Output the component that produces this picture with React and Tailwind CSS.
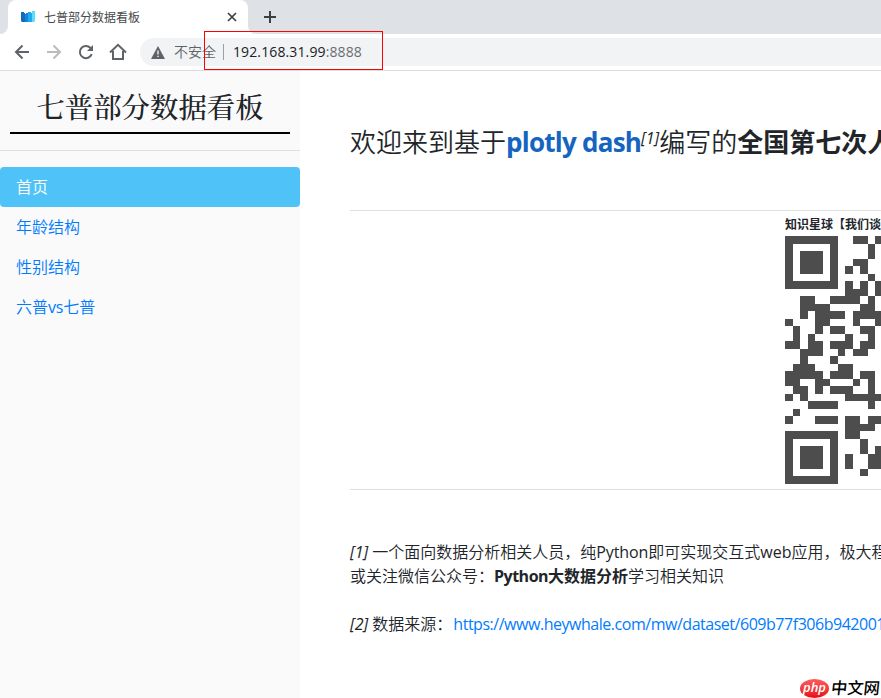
import React from "react";

const navItems = [
  { key: "home", label: "首页" },
  { key: "age", label: "年龄结构" },
  { key: "gender", label: "性别结构" },
  {
    key: "compare",
    label: (
      <>
        六普<span className="font-normal tracking-[-0.2px]">vs</span>七普
      </>
    ),
  },
];

const qrRows = [
  "1111111001101",
  "1000001000010",
  "1011101000010",
  "1011101001100",
  "1011101010100",
  "1000001000010",
  "1111111010101",
  "0000000011101",
  "0011001111010",
  "0011110000110",
  "0010111101111",
  "1000110001001",
  "0100101100110",
  "0101000010010",
  "1101101110110",
  "0011100101100",
  "0010001000000",
  "0111000110000",
  "1111101110110",
  "1100110001010",
  "0110101110010",
  "1010000011111",
  "0001111000010",
  "0100000000000",
  "1000111011011",
  "0000000011110",
  "1111111011000",
  "1000001000100",
  "1011101000101",
  "1011101010011",
  "1011101010011",
  "1000001000100",
  "1111111000000",
];

function QrCode() {
  return (
    <svg
      width="98"
      height="248"
      viewBox="0 0 13 33"
      preserveAspectRatio="none"
      className="block shrink-0"
      shapeRendering="crispEdges"
    >
      {qrRows.map((row, y) =>
        row.split("").map((cell, x) =>
          cell === "1" ? (
            <rect key={`${x}-${y}`} x={x} y={y} width="1" height="1" fill="#4d4d4d" />
          ) : null
        )
      )}
    </svg>
  );
}

function TabStrip() {
  return (
    <div className="flex h-[34px] bg-[#dee1e6]">
      <svg width="8" height="8" className="self-end">
        <path d="M0 8A8 8 0 0 0 8 0V8Z" fill="#fff" />
      </svg>
      <div className="flex h-full w-60 items-center rounded-t-lg bg-white pl-[13px] pr-[10px]">
        <svg width="14" height="12" viewBox="0 0 14 12" className="mr-[9px] shrink-0">
          <path d="M0 1h3v1h1v9H1L0 10z" fill="#0d6cbd" />
          <path d="M4 3h1V2h2v9H4z" fill="#1583d8" />
          <path d="M7 1h3v1h1v9H7z" fill="#1fa9ee" />
          <path d="M11 0h3v10l-1 1h-2z" fill="#5cdcfb" />
        </svg>
        <span className="flex-1 pt-px text-[12px] leading-4 text-[#45484c]">七普部分数据看板</span>
        <svg width="12" height="12" viewBox="0 0 12 12" fill="none" stroke="#3c4043" strokeWidth="1.7">
          <path d="M2 2l8 8M10 2l-8 8" />
        </svg>
      </div>
      <svg width="8" height="8" className="self-end">
        <path d="M8 8A8 8 0 0 1 0 0V8Z" fill="#fff" />
      </svg>
      <svg width="12" height="12" viewBox="0 0 12 12" className="ml-2 mt-[11px]" stroke="#3c4043" strokeWidth="2">
        <path d="M6 0v12M0 6h12" />
      </svg>
    </div>
  );
}

function Toolbar() {
  return (
    <div className="relative flex h-[37px] items-center border-b border-[#dadce0] bg-white pl-[14px]">
      <svg width="16" height="16" viewBox="0 0 16 16" fill="none" stroke="#5f6368" strokeWidth="2">
        <path d="M15 8H2M8.500 1.500L2 8l6.500 6.500" />
      </svg>
      <svg width="16" height="16" viewBox="0 0 16 16" fill="none" stroke="#babcbe" strokeWidth="2" className="ml-4">
        <path d="M1 8h13M7.500 1.500L14 8l-6.500 6.500" />
      </svg>
      <svg width="16" height="16" viewBox="0 0 16 16" className="ml-4">
        <path d="M13.700 10.200A6.100 6.100 0 1 1 12.300 3.800L14 5.500" fill="none" stroke="#5f6368" strokeWidth="2" />
        <path d="M15 1v6H9z" fill="#5f6368" />
      </svg>
      <svg width="18" height="18" viewBox="0 0 18 18" fill="none" stroke="#5f6368" strokeWidth="2" className="ml-[15px]">
        <path d="M1 9.500L9 1.800l8 7.700M4 8v8h10V8" />
      </svg>
      <div className="ml-[13px] flex h-7 flex-1 items-center rounded-l-full bg-[#f1f3f4] pl-[11px] text-[14px]">
        <svg width="14" height="13" viewBox="0 0 14 13">
          <path d="M7 0l7 13H0z" fill="#5f6368" />
          <path d="M6.300 4.500h1.400v4H6.300zM6.300 9.700h1.400v1.400H6.300z" fill="#f1f3f4" />
        </svg>
        <span className="ml-[9px] pb-0.5 font-[350] text-[#5f6368]">不安全</span>
        <span className="ml-[7px] h-4 w-px bg-[#9aa0a6]" />
        <span className="ml-[9px] pb-0.5 tracking-[0.12px] text-[#202124]">
          192.168.31.99<span className="text-[#6a6e73]">:8888</span>
        </span>
      </div>
      <div className="absolute left-[204px] -top-[3px] h-[39px] w-[179px] border border-[#f00]" />
    </div>
  );
}

function Sidebar() {
  return (
    <aside className="w-[300px] shrink-0 bg-[#fafafa]">
      <div className="mx-[10px] flex h-[63px] items-center justify-center border-b-2 border-black pt-[10px]">
        <h1 className="whitespace-nowrap font-['Noto_Serif_CJK_SC','Noto_Serif_SC','Source_Han_Serif_SC',serif] text-[28.400px] font-medium leading-none text-[#212529]">
          七普部分数据看板
        </h1>
      </div>
      <hr className="mb-4 mt-4 border-[#e0e0e0]" />
      <nav className="font-[350]">
        {navItems.map((item, i) => (
          <a
            key={item.key}
            className={
              i === 0
                ? "block h-10 rounded bg-[#4fc3f7] px-4 py-2 leading-6 text-white"
                : "block h-10 px-4 py-2 leading-6 text-[#007bff]"
            }
          >
            {item.label}
          </a>
        ))}
      </nav>
    </aside>
  );
}

function Content() {
  return (
    <main className="min-w-0 flex-1 overflow-hidden whitespace-nowrap bg-white pl-[50px] pt-[51px] font-[350]">
      <h2 className="flex h-10 items-center text-[26px] leading-10">
        <span>欢迎来到基于</span>
        <span className="w-[135px] font-bold tracking-[-0.75px] text-[#1565c0]">plotly dash</span>
        <sup className="top-0 -mt-2 w-[19px] text-[16px] font-normal italic leading-none">[1]</sup>
        <span>编写的</span>
        <span className="font-bold">全国第七次人口普查</span>
      </h2>
      <hr className="mt-12 border-[#dfdfdf]" />
      <div className="h-[278px] pl-[435px] pt-[5px]">
        <p className="mb-[3px] text-[12px] font-bold leading-[17px]">知识星球【我们谈论数据科学】</p>
        <QrCode />
      </div>
      <hr className="border-[#dfdfdf]" />
      <p className="mt-[50px] leading-6">
        <i className="font-normal">[1]</i> 一个面向数据分析相关人员，纯
        <span className="font-normal tracking-[-0.1px]">Python</span>即可实现交互式
        <span className="font-normal">web</span>应用，极大程度
        <br />
        或关注微信公众号：
        <b>
          <span className="tracking-[-0.5px]">Python</span>大数据分析
        </b>
        学习相关知识
      </p>
      <p className="mt-6 leading-6">
        <i className="font-normal">[2]</i> 数据来源：
        <a className="ml-px font-normal tracking-[-0.47px] text-[#007bff]">
          https://www.heywhale.com/mw/dataset/609b77f306b942001
        </a>
      </p>
    </main>
  );
}

function Watermark() {
  return (
    <div className="absolute bottom-0 right-0 flex h-5 w-[81px] items-center overflow-hidden">
      <div className="flex h-[19px] w-[29px] shrink-0 items-center justify-center rounded-[50%] bg-gradient-to-b from-[#ff5a5a] to-[#e60012] pb-px text-[13px] font-semibold italic leading-none text-white">
        php
      </div>
      <span className="ml-[2px] -skew-x-6 whitespace-nowrap text-[16.300px] font-medium leading-none text-black">
        中文网
      </span>
    </div>
  );
}

export default function App() {
  return (
    <div className="relative flex h-[698px] w-[881px] flex-col overflow-hidden bg-white font-['Open_Sans','Noto_Sans_CJK_SC',sans-serif] text-[16px] text-[#212529]">
      <TabStrip />
      <Toolbar />
      <div className="flex min-h-0 flex-1">
        <Sidebar />
        <Content />
      </div>
      <Watermark />
    </div>
  );
}
